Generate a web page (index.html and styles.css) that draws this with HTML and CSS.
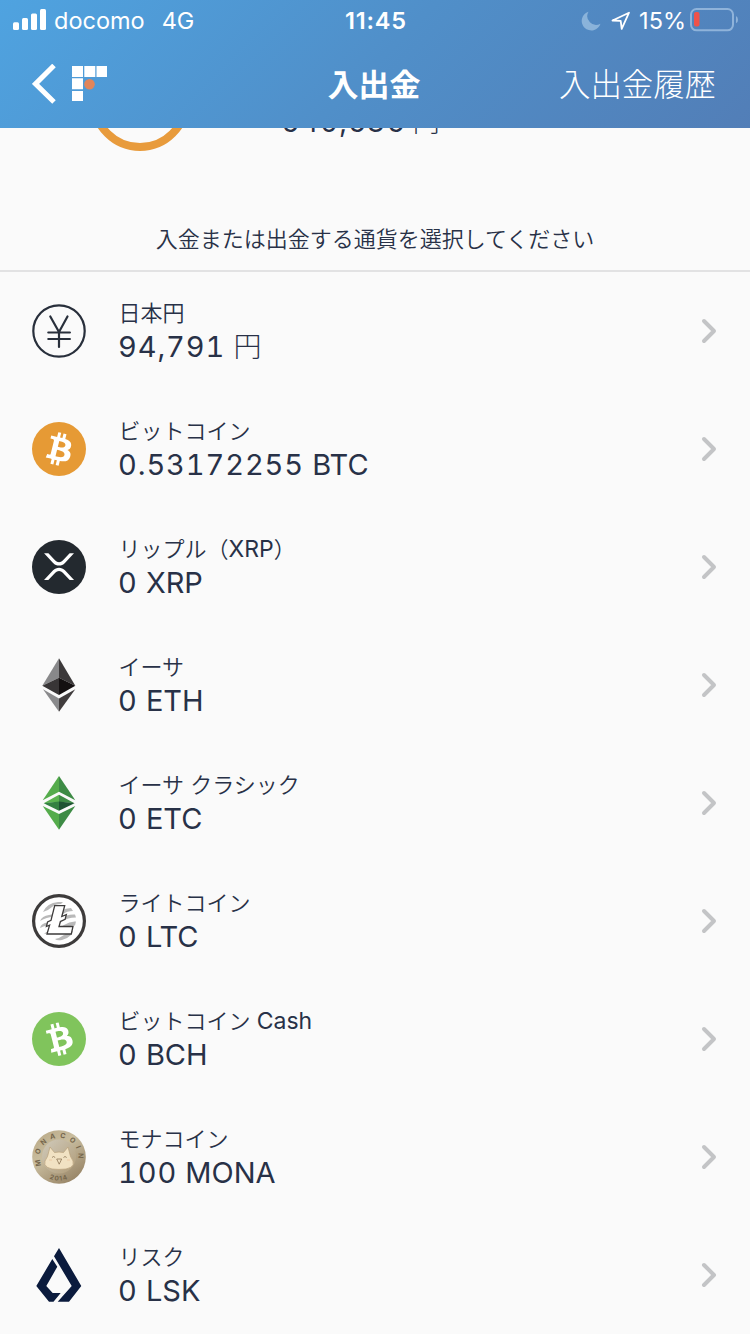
FILE: index.html
```html
<!DOCTYPE html>
<html lang="ja">
<head>
<meta charset="utf-8">
<title>入出金</title>
<link rel="stylesheet" href="styles.css">
</head>
<body>
<svg class="defs" aria-hidden="true">
  <symbol id="chevron" viewBox="0 0 16 26"><path d="M3 3l10 10L3 23" fill="none" stroke="#c3c4c6" stroke-width="4" stroke-linecap="round" stroke-linejoin="round"/></symbol>
  <symbol id="bitcoin" viewBox="0 0 32 32"><path fill="#fff" fill-rule="evenodd" d="M23.189 14.02c.314-2.096-1.283-3.223-3.465-3.975l.708-2.84-1.728-.43-.69 2.765c-.454-.114-.92-.22-1.385-.326l.695-2.783L15.596 6l-.708 2.839c-.376-.086-.746-.17-1.104-.26l.002-.009-2.384-.595-.46 1.846s1.283.294 1.256.312c.7.175.826.638.805 1.006l-.806 3.235c.048.012.11.03.18.057l-.183-.045-1.13 4.532c-.086.212-.303.531-.793.41.018.025-1.256-.313-1.256-.313l-.858 1.978 2.25.561c.418.105.828.215 1.231.318l-.715 2.872 1.727.43.708-2.84c.472.127.93.245 1.378.357l-.706 2.828 1.728.43.715-2.866c2.948.558 5.164.333 6.097-2.333.752-2.146-.037-3.385-1.588-4.192 1.13-.26 1.98-1.003 2.207-2.538zm-3.95 5.538c-.533 2.147-4.148.986-5.32.695l.95-3.805c1.172.293 4.929.872 4.37 3.11zm.535-5.569c-.487 1.953-3.495.96-4.47.717l.86-3.45c.975.243 4.118.696 3.61 2.733z"/></symbol>
</svg>
<div class="app">
  <header class="header">
    <div class="status">
      <div class="status-left">
        <svg class="signal" width="34" height="22" viewBox="0 0 34 22" fill="#fff"><rect x="0" y="13.3" width="6" height="7.7" rx="1.5"/><rect x="9" y="9" width="6" height="12" rx="1.5"/><rect x="18" y="4.500" width="6" height="16.500" rx="1.5"/><rect x="27" y="0" width="6" height="21" rx="1.5"/></svg>
        <span class="carrier">docomo</span>
        <span class="network">4G</span>
      </div>
      <span class="clock">11:45</span>
      <div class="status-right">
        <svg width="20" height="20" viewBox="0 0 20 20"><path d="M7.500.7a9.600 9.600 0 1 0 12 12A8.800 8.800 0 0 1 7.500.7z" fill="#8ab3da"/></svg>
        <svg class="locate" width="20" height="20" viewBox="0 0 20 20"><path d="M1.500 9.500L18 1.700l-7.300 16.200-1-8z" fill="none" stroke="#fff" stroke-width="1.8" stroke-linejoin="round"/></svg>
        <span class="percent">15%</span>
        <svg class="battery" width="49" height="24" viewBox="0 0 49 24"><rect x="1" y="1" width="42" height="21.300" rx="5.500" fill="none" stroke="#8fb3da" stroke-width="2"/><rect x="4" y="4" width="5.500" height="14.500" rx="2" fill="#f0524a"/><path d="M46 8q2 1 2 3.700T46 15.300z" fill="#8fb3da"/></svg>
      </div>
    </div>
    <nav class="nav">
      <div class="nav-left">
        <svg width="25" height="40" viewBox="0 0 25 40"><path d="M22 1.500L3.500 19.900 22 38" fill="none" stroke="#fff" stroke-width="5"/></svg>
        <svg class="logo" width="36" height="36" viewBox="0 0 36 36"><g fill="#fff"><path d="M0 0h11v11H0zM12.300 0h11v11h-11zM24.500 0h10.500v11H24.500zM0 12.300h11v11H0zM0 25h11v10H0z"/></g><circle cx="17.500" cy="18.200" r="5.300" fill="#e2855a"/></svg>
      </div>
      <h1 class="title">入出金</h1>
      <a class="history">入出金履歴</a>
    </nav>
  </header>
  <main class="content">
    <section class="summary">
      <svg width="100" height="100" viewBox="0 0 100 100"><circle cx="50" cy="50" r="46" fill="none" stroke="#e89b3c" stroke-width="8"/></svg>
      <span class="amount total"><span class="num">640,636</span> <span class="yen">円</span></span>
    </section>
    <p class="prompt">入金または出金する通貨を選択してください</p>
    <ul class="list">
      <li class="row">
        <svg class="coin" viewBox="0 0 54 54"><g fill="none" stroke="#282f3b" stroke-width="2.200" stroke-linecap="round" stroke-linejoin="round"><circle cx="27" cy="27" r="25.700"/><path d="M18.300 12.500L27 28l8.500-15.500M27 28v15M16.300 28.500h21.600M16.300 35h21.600"/></g></svg>
        <div class="info"><span class="name">日本円</span><span class="amount"><span class="num">94,791</span> <span class="yen">円</span></span></div>
        <svg class="chev"><use href="#chevron"/></svg>
      </li>
      <li class="row">
        <svg class="coin" viewBox="0 0 54 54"><circle cx="27" cy="27" r="27" fill="#e69a35"/><use href="#bitcoin" width="54" height="54"/></svg>
        <div class="info"><span class="name">ビットコイン</span><span class="amount"><span class="num">0.53172255</span> BTC</span></div>
        <svg class="chev"><use href="#chevron"/></svg>
      </li>
      <li class="row">
        <svg class="coin" viewBox="0 0 54 54"><circle cx="27" cy="27" r="27" fill="#23292f"/><g fill="#fff" transform="translate(12 13.300) scale(.0587 .063)"><path d="M437 0h74L357 152.480c-55.770 55.190-146.190 55.190-202 0L.94 0H75l117 115.830a91.110 91.110 0 0 0 127.910 0z"/><path d="M74.050 424H0l155-153.420c55.770-55.190 146.190-55.190 202 0L512 424h-74L320 307.230a91.110 91.110 0 0 0-127.910 0z"/></g></svg>
        <div class="info"><span class="name">リップル（<span class="latin">XRP</span>）</span><span class="amount"><span class="num">0</span> XRP</span></div>
        <svg class="chev"><use href="#chevron"/></svg>
      </li>
      <li class="row">
        <svg class="coin" viewBox="0 0 54 54"><path d="M27 .3L10.300 27.700 27 19.700z" fill="#88888a"/><path d="M27 .3l16.300 27.400L27 19.700z" fill="#3c393a"/><path d="M27 19.700l-16.700 8L27 37z" fill="#383536"/><path d="M27 19.700l16.300 8L27 37z" fill="#141011"/><path d="M11 31.300l16 9.200v13.200z" fill="#8a8a8c"/><path d="M43.300 31.300L27 40.500v13.200z" fill="#403c3d"/></svg>
        <div class="info"><span class="name">イーサ</span><span class="amount"><span class="num">0</span> ETH</span></div>
        <svg class="chev"><use href="#chevron"/></svg>
      </li>
      <li class="row">
        <svg class="coin" viewBox="0 0 54 54"><path d="M27 0L10.700 24.300l16.300-8.600z" fill="#55ac4c"/><path d="M27 0l16.300 24.300L27 15.700z" fill="#3d8b45"/><path d="M27 18.700l-15.300 8.600L27 26z" fill="#5bb350"/><path d="M27 18.700l15.500 8.600L27 26z" fill="#3d8b45"/><path d="M11.700 27.300L27 25.500v9.200z" fill="#348142"/><path d="M42.500 27.300L27 25.500v9.200z" fill="#1e5333"/><path d="M10.700 30L27 38v15.700z" fill="#55ac4c"/><path d="M43.300 30L27 38v15.700z" fill="#3d8b45"/></svg>
        <div class="info"><span class="name">イーサ クラシック</span><span class="amount"><span class="num">0</span> ETC</span></div>
        <svg class="chev"><use href="#chevron"/></svg>
      </li>
      <li class="row">
        <svg class="coin" viewBox="0 0 54 54"><circle cx="27" cy="27" r="25.400" fill="#fff" stroke="#3d3b3b" stroke-width="3.200"/><g fill="#b9b9b9"><path d="M11 18Q15 9 26 8h5l-2 2q-6 0-9 3t-9 5zM8 27q2-5 9-6t12-4 10-3l2 3q-6 0-10 3t-10 3-13 4zM8 34q1-5 8-5.500t13-4.500 14-3.500l1 3q-9 0-13 3.500t-10 3.500-13 3.500zM12 40q4-4 9-4.500t11-4.500 12-3.500l-1 4q-7 0-11 3.500t-10 3.500zM23 45q5-1 9-4t9-4l-2 4q-4 4-9 5t-7-1z"/></g><path d="M22.700 11.700h10l-2.900 10.800 4.500-1.800-1.200 4.600-4.700 2.200-1.400 5h14l-1.700 7.500H15l2.600-8.800-3.200 1.300 1.200-4.600 3.400-1.600z" fill="#fff" stroke="#3d3b3b" stroke-width="1.300"/></svg>
        <div class="info"><span class="name">ライトコイン</span><span class="amount"><span class="num">0</span> LTC</span></div>
        <svg class="chev"><use href="#chevron"/></svg>
      </li>
      <li class="row">
        <svg class="coin" viewBox="0 0 54 54"><circle cx="27" cy="27" r="27" fill="#80c45c"/><g transform="rotate(-28 27 27)"><use href="#bitcoin" width="54" height="54"/></g></svg>
        <div class="info"><span class="name">ビットコイン <span class="latin">Cash</span></span><span class="amount"><span class="num">0</span> BCH</span></div>
        <svg class="chev"><use href="#chevron"/></svg>
      </li>
      <li class="row">
        <svg class="coin" viewBox="0 0 54 54">
          <defs>
            <linearGradient id="gold" x1="0" y1="0" x2=".7" y2="1"><stop offset="0" stop-color="#b7a683"/><stop offset=".45" stop-color="#c9bd9f"/><stop offset="1" stop-color="#988567"/></linearGradient>
            <linearGradient id="disc" x1="0" y1="0" x2="1" y2="1"><stop offset="0" stop-color="#d0cabb"/><stop offset="1" stop-color="#b09c78"/></linearGradient>
            <path id="arc-top" d="M9.600 35.500A19.300 19.300 0 1 1 44.400 35.500"/>
            <path id="arc-bottom" d="M14 46.500Q27 55 40 46.500"/>
          </defs>
          <circle cx="27" cy="27" r="26.800" fill="url(#gold)"/><circle cx="27" cy="26.500" r="17" fill="url(#disc)"/>
          <text class="mona-top"><textPath href="#arc-top">MONACOIN</textPath></text>
          <text class="mona-year"><textPath href="#arc-bottom" startOffset="50%">2014</textPath></text>
          <path d="M18 17l4.500 5.500q4.500-1 9 0L36 17l2.500 9.500q7.500 10-4.500 12.500-7 .8-14 0-12-2.500-4.500-12.500z" fill="#f1e2c3" stroke="#b8a17b" stroke-width=".7"/>
          <path d="M20 27.500l1.500-1 1.700 1M31.500 27.500l1.500-1 1.700 1M24.700 29h5l-2.500 5.200z" fill="none" stroke="#8d7657" stroke-width=".8"/>
          <path d="M17 30h3M35 30h3" stroke="#eec9a6" stroke-width="1.200"/>
        </svg>
        <div class="info"><span class="name">モナコイン</span><span class="amount"><span class="num">100</span> MONA</span></div>
        <svg class="chev"><use href="#chevron"/></svg>
      </li>
      <li class="row">
        <svg class="coin" viewBox="0 0 54 54" fill="#0b1b3d"><path d="M27 0l22.300 38L37 53.700H25.700L39.700 38 22 8.300z"/><path d="M20.300 11l5 7.700L14.300 38l6.400 7h8l-7.200 8.700H17L4.300 38z"/></svg>
        <div class="info"><span class="name">リスク</span><span class="amount"><span class="num">0</span> LSK</span></div>
        <svg class="chev"><use href="#chevron"/></svg>
      </li>
    </ul>
  </main>
</div>
</body>
</html>
```
FILE: styles.css
```css
* { box-sizing: border-box; }
body {
  margin: 0;
  background: #fafafa;
  color: #283147;
  font-family: Inter, "Noto Sans CJK JP", sans-serif;
}
svg { display: block; flex: none; }
.defs { display: none; }
.app { width: 750px; height: 1334px; overflow: hidden; }
.header {
  height: 128px;
  color: #fff;
  background: linear-gradient(135deg, #4fa3e0 0%, #508fc9 50%, #527eb7 100%);
}
.status {
  height: 40px;
  display: grid;
  grid-template-columns: 1fr auto 1fr;
  align-items: center;
  padding: 1px 11px 0 13px;
  font-size: 24px;
  line-height: 40px;
}
.status-left, .status-right { display: flex; align-items: center; }
.status-right { justify-content: flex-end; }
.signal { margin-top: -3px; }
.carrier { margin-left: 7px; font-size: 23.5px; }
.network { margin-left: 17px; font-size: 23.5px; }
.clock { font-weight: 600; font-size: 23.5px; letter-spacing: .8px; }
.locate { margin-left: 10px; }
.percent { margin-left: 8px; font-size: 23.5px; }
.battery { margin: -3px 0 0 4px; }
.nav {
  height: 88px;
  display: grid;
  grid-template-columns: 1fr auto 1fr;
  align-items: center;
  padding: 0 34px 0 32px;
}
.nav-left { display: flex; align-items: center; gap: 15px; }
.title, .history { padding-top: 2px; line-height: 44px; }
.title { margin: 0; font-size: 31px; font-weight: 700; }
.history { justify-self: end; font-size: 31.400px; font-weight: 300; white-space: nowrap; }
.content { height: 1206px; overflow: hidden; display: flow-root; }
.summary {
  height: 153px;
  margin-top: -77px;
  padding-left: 90px;
  display: flex;
  align-items: flex-start;
}
.prompt {
  height: 68px;
  margin: 0;
  padding-top: 19px;
  border-bottom: 2px solid #e2e2e3;
  text-align: center;
  font-size: 22px;
  line-height: 32px;
  font-weight: 350;
}
.list { list-style: none; margin: 0; padding: 0; }
.row { height: 118px; display: flex; align-items: center; padding: 0 33px 0 32px; }
.coin { width: 54px; height: 54px; overflow: visible; }
.info { flex: 1; margin-left: 32px; padding-top: 1px; display: flex; flex-direction: column; }
.name { padding-left: .5px; font-size: 22px; line-height: 30px; font-weight: 350; white-space: pre; }
.latin { font-size: 23px; font-weight: 400; }
.amount { font-size: 29px; line-height: 37px; font-weight: 400; white-space: pre; }
.num { letter-spacing: .9px; font-feature-settings: "tnum"; }
.yen { font-size: 28px; line-height: 1; font-weight: 300; }
.total { margin: 52px 0 0 91px; font-size: 28.5px; }
.total .yen { margin-left: -1px; font-size: 27px; }
.chev { width: 16px; height: 26px; }
.mona-top { font: 700 7px Inter, sans-serif; letter-spacing: 4.300px; fill: #75664c; }
.mona-year { font: 700 6.500px Inter, sans-serif; letter-spacing: 1.100px; text-anchor: middle; fill: #75664c; }
```
